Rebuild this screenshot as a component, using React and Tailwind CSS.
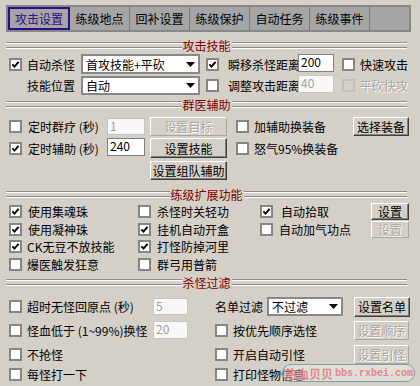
import React from "react";

const Check = ({ checked, disabled, className = "" }) => (
  <span
    className={`flex h-[13px] w-[13px] shrink-0 items-center justify-center border-2 ${
      disabled ? "border-[#c2bfb8] bg-[#d4d0c8]" : "border-[#858585] bg-white"
    } ${className}`}
  >
    {checked && (
      <svg width="9" height="9" viewBox="0 0 9 9">
        <path d="M1.4 4.3 L3.5 6.6 L7.6 1.8" fill="none" stroke="#000" strokeWidth="1.9" />
      </svg>
    )}
  </span>
);

const Btn = ({ children, disabled, className = "" }) => (
  <div
    className={`flex shrink-0 items-center justify-center whitespace-nowrap border ${
      disabled
        ? "border-t-white border-l-white border-r-[#a9a6a0] border-b-[#a9a6a0] text-[#a9a6a0] [text-shadow:1px_1px_0_#fff]"
        : "border-t-white border-l-white border-r-[#404040] border-b-[#404040] shadow-[inset_-1px_-1px_0_#808080] text-black"
    } ${className}`}
  >
    {children}
  </div>
);

const Field = ({ value, disabled, className = "" }) => (
  <div
    className={`shrink-0 border px-[2px] leading-[13px] ${
      disabled ? "border-[#c6c6c6] bg-[#f8f8f8] text-[#a0a0a0]" : "border-[#808080] bg-white text-black"
    } ${className}`}
  >
    {value}
  </div>
);

const Select = ({ value, className = "" }) => (
  <div className={`flex shrink-0 items-center justify-between border-2 border-[#888] bg-white pl-[3px] pr-[3px] ${className}`}>
    <span className="whitespace-nowrap">{value}</span>
    <svg width="9" height="5" viewBox="0 0 9 5">
      <path d="M0 0H9L4.5 5Z" fill="#000" />
    </svg>
  </div>
);

const Rule = () => (
  <div className="flex flex-1 flex-col">
    <div className="h-px bg-[#8c8c8c]" />
    <div className="h-px bg-white" />
    <div className="h-[3px]" />
    <div className="h-px bg-[#8c8c8c]" />
    <div className="h-px bg-white" />
  </div>
);

const Header = ({ title, className = "" }) => (
  <div className={`flex h-[13px] items-center pl-[6px] pr-[13px] ${className}`}>
    <Rule />
    <span className="px-[1px] leading-[13px] text-[#800000]">{title}</span>
    <Rule />
  </div>
);

const Opt = ({ checked, label, gap = "ml-[6px]" }) => (
  <div className="flex items-center">
    <Check checked={checked} />
    <span className={`${gap} whitespace-nowrap`}>{label}</span>
  </div>
);

const tabs = ["练级地点", "回补设置", "练级保护", "自动任务", "练级事件"];

export default function App() {
  return (
    <div className="relative h-[386px] w-[420px] overflow-hidden bg-[#d4d0c8] font-['Noto_Sans_CJK_SC','Noto_Sans',sans-serif] text-[12px] leading-[13px] text-black">
      {/* tabs */}
      <div className="ml-[6px] mt-[5px] flex h-[27px] w-[405px] border-2 border-[#878787] bg-[#a5a5a5]">
        <div className="flex h-full w-[62px] items-center justify-center border-2 border-[#2c0c88] text-[#2c0c88]">
          攻击设置
        </div>
        {tabs.map((t) => (
          <div key={t} className="flex h-full w-[60px] items-center justify-center border-r border-[#7c7c7c]">
            {t}
          </div>
        ))}
      </div>

      {/* 攻击技能 */}
      <Header title="攻击技能" className="mt-[7px]" />
      <div className="mt-[2px] flex h-[20px] items-center pl-[9px]">
        <Check checked />
        <span className="ml-[5px] w-[48px] whitespace-nowrap">自动杀怪</span>
        <Select value="首攻技能+平砍" className="ml-[6px] h-[20px] w-[119px]" />
        <Check checked className="ml-[6px]" />
        <span className="ml-[9px] w-[70px] whitespace-nowrap">瞬移杀怪距离</span>
        <Field value="200" className="h-[18px] w-[36px] self-start" />
        <Check className="ml-[8px]" />
        <span className="ml-[5px] whitespace-nowrap">快速攻击</span>
      </div>
      <div className="mt-[1px] flex h-[20px] items-center pl-[27px]">
        <span className="w-[48px] whitespace-nowrap">技能位置</span>
        <Select value="自动" className="ml-[6px] h-[19px] w-[119px]" />
        <Check className="ml-[6px]" />
        <span className="ml-[9px] w-[70px] whitespace-nowrap">调整攻击距离</span>
        <Field value="40" disabled className="h-[18px] w-[36px] self-start" />
        <Check disabled className="ml-[8px]" />
        <span className="ml-[5px] whitespace-nowrap text-[#a9a6a0] [text-shadow:1px_1px_0_#fff]">平砍快攻</span>
      </div>

      {/* 群医辅助 */}
      <Header title="群医辅助" className="mt-[3px]" />
      <div className="mt-[5px] flex h-[20px] items-center pl-[9px]">
        <Check />
        <span className="ml-[6px] w-[79px] whitespace-nowrap">定时群疗 (秒)</span>
        <Field value="1" disabled className="h-[17px] w-[38px]" />
        <Btn disabled className="ml-[5px] h-[19px] w-[77px]">设置目标</Btn>
        <Check className="ml-[9px]" />
        <span className="ml-[5px] w-[99px] whitespace-nowrap">加辅助换装备</span>
        <Btn className="h-[19px] w-[56px]">选择装备</Btn>
      </div>
      <div className="mt-[2px] flex h-[20px] items-center pl-[9px]">
        <Check checked />
        <span className="ml-[6px] w-[79px] whitespace-nowrap">定时辅助 (秒)</span>
        <Field value="240" className="h-[18px] w-[38px] self-start" />
        <Btn className="ml-[5px] h-[20px] w-[77px]">设置技能</Btn>
        <Check className="ml-[9px]" />
        <span className="ml-[5px] whitespace-nowrap">怒气95%换装备</span>
      </div>
      <div className="mt-[2px] flex h-[20px] items-center pl-[150px]">
        <Btn className="h-[19px] w-[77px]">设置组队辅助</Btn>
      </div>

      {/* 练级扩展功能 */}
      <Header title="练级扩展功能" className="mt-[8px]" />
      <div className="mt-[1px] grid grid-cols-[129px_122px_111px_38px] grid-rows-[18px_18px_17px_18px] pl-[9px]">
        <Opt checked label="使用集魂珠" />
        <Opt label="杀怪时关轻功" />
        <Opt checked label="自动拾取" gap="ml-[8px]" />
        <div className="flex items-center">
          <Btn className="h-[17px] w-[38px]">设置</Btn>
        </div>

        <Opt checked label="使用凝神珠" />
        <Opt checked label="挂机自动开盒" />
        <Opt label="自动加气功点" gap="ml-[6px]" />
        <div className="flex items-center">
          <Btn disabled className="h-[17px] w-[38px]">设置</Btn>
        </div>

        <Opt checked label="CK无豆不放技能" gap="ml-[5px]" />
        <Opt checked label="打怪防掉河里" />
        <div />
        <div />

        <Opt label="爆医触发狂意" gap="ml-[5px]" />
        <Opt label="群弓用普箭" />
        <div />
        <div />
      </div>

      {/* 杀怪过滤 */}
      <Header title="杀怪过滤" className="mt-[3px]" />
      <div className="mt-[7px] flex h-[21px] items-center pl-[9px]">
        <div className="flex w-[206px] items-center">
          <Check />
          <span className="ml-[5px] w-[126px] whitespace-nowrap">超时无怪回原点 (秒)</span>
          <Field value="5" disabled className="h-[17px] w-[35px]" />
        </div>
        <span className="w-[48px] whitespace-nowrap">名单过滤</span>
        <Select value="不过滤" className="ml-[4px] h-[19px] w-[76px]" />
        <Btn className="ml-[11px] h-[20px] w-[56px]">设置名单</Btn>
      </div>
      <div className="mt-[2px] flex h-[22px] items-center pl-[9px]">
        <div className="flex w-[206px] items-center">
          <Check />
          <span className="ml-[5px] w-[126px] whitespace-nowrap">怪血低于 (1~99%)换怪</span>
          <Field value="20" disabled className="h-[18px] w-[35px]" />
        </div>
        <Check />
        <span className="ml-[5px] w-[121px] whitespace-nowrap">按优先顺序选怪</span>
        <Btn disabled className="h-[19px] w-[55px]">设置顺序</Btn>
      </div>
      <div className="mt-[2px] flex h-[22px] items-center pl-[9px]">
        <div className="flex w-[206px] items-center">
          <Check />
          <span className="ml-[5px] whitespace-nowrap">不抢怪</span>
        </div>
        <Check />
        <span className="ml-[5px] w-[121px] whitespace-nowrap">开启自动引怪</span>
        <Btn disabled className="h-[19px] w-[55px]">设置引怪</Btn>
      </div>
      <div className="flex h-[18px] items-center pl-[9px]">
        <div className="flex w-[206px] items-center">
          <Check />
          <span className="ml-[5px] whitespace-nowrap">每怪打一下</span>
        </div>
        <Check />
        <span className="ml-[5px] whitespace-nowrap">打印怪物信息</span>
      </div>

      {/* watermark */}
      <div className="absolute left-[282px] top-[364px] flex h-[18px] w-[133px] items-center gap-[2px] whitespace-nowrap rounded-full border border-[#7fa29f] bg-white/30 pl-[2px] font-bold text-[#e07a80]/90">
        <span className="text-[12px] leading-[13px]">热血贝贝</span>
        <span className="font-['Liberation_Mono',monospace] text-[10px] leading-[13px]">bbs.rxbei.com</span>
      </div>
    </div>
  );
}
